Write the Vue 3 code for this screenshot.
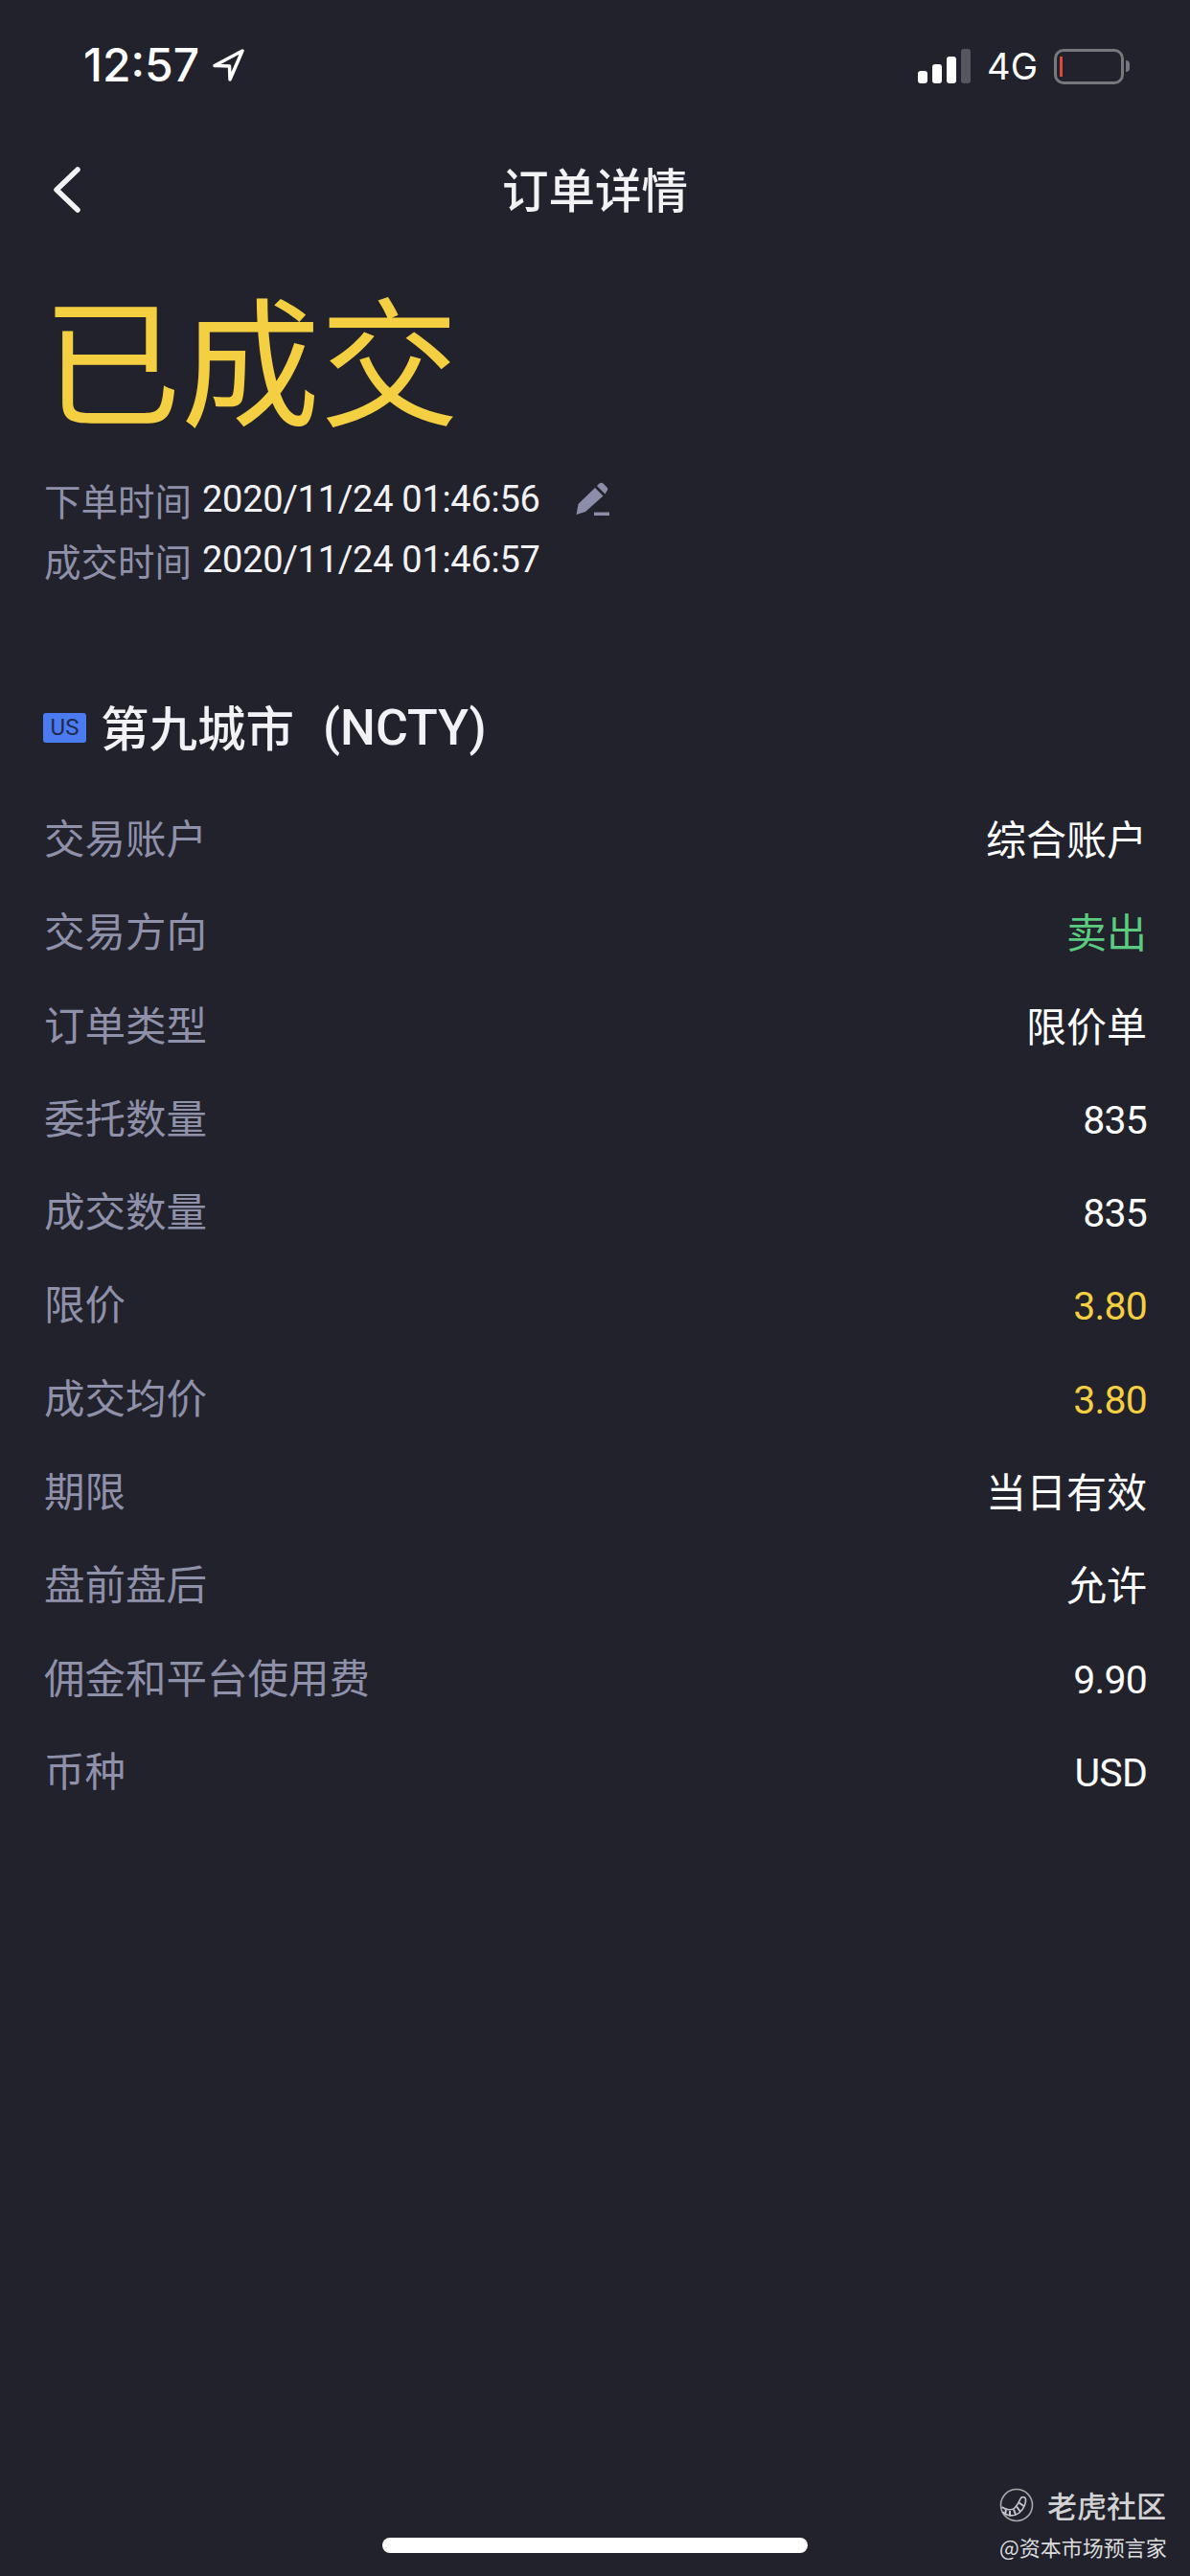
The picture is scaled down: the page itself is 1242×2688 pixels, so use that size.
<script setup>
const rows = [
  { label: '交易账户', value: '综合账户', tone: 'plain' },
  { label: '交易方向', value: '卖出', tone: 'green' },
  { label: '订单类型', value: '限价单', tone: 'plain' },
  { label: '委托数量', value: '835', tone: 'plain', num: true },
  { label: '成交数量', value: '835', tone: 'plain', num: true },
  { label: '限价', value: '3.80', tone: 'yellow', num: true },
  { label: '成交均价', value: '3.80', tone: 'yellow', num: true },
  { label: '期限', value: '当日有效', tone: 'plain' },
  { label: '盘前盘后', value: '允许', tone: 'plain' },
  { label: '佣金和平台使用费', value: '9.90', tone: 'plain', num: true },
  { label: '币种', value: 'USD', tone: 'plain', num: true },
]
</script>

<template>
  <div class="page">
    <header class="status">
      <div class="status-left">
        <span class="clock">12:57</span>
        <svg class="loc" viewBox="0 0 34 34"><path d="M31 2 2 17.500 17.500 18 18 32Z" fill="none" stroke="#fff" stroke-width="3.500" stroke-linejoin="round"/></svg>
      </div>
      <div class="status-right">
        <div class="signal"><i class="b1"></i><i class="b2"></i><i class="b3"></i><i class="b4"></i></div>
        <span class="net">4G</span>
        <div class="battery"><div class="battery-body"><i></i></div><div class="battery-cap"></div></div>
      </div>
    </header>

    <nav class="nav">
      <svg class="back" viewBox="0 0 32 48"><path d="M27 3 5 24l22 21" fill="none" stroke="#f2f2f4" stroke-width="5.500" stroke-linecap="round" stroke-linejoin="round"/></svg>
      <h1 class="title">订单详情</h1>
    </nav>

    <div class="state">已成交</div>

    <div class="times">
      <div class="time-row">
        <span class="time-label">下单时间</span>
        <span class="time-value">2020/11/24 01:46:56</span>
        <svg class="pencil" viewBox="0 0 36 36"><path d="M20 6 28.500 14.500 10 31 .5 34 2.500 23ZM22 4l2-2a3.500 3.500 0 0 1 5 0l3 3a3.500 3.500 0 0 1 0 5l-1.500 2.500Z" fill="#8c8da8"/><rect x="19" y="31.500" width="16" height="3.500" fill="#8c8da8"/></svg>
      </div>
      <div class="time-row">
        <span class="time-label">成交时间</span>
        <span class="time-value">2020/11/24 01:46:57</span>
      </div>
    </div>

    <div class="stock">
      <span class="badge">US</span>
      <span class="stock-name">第九城市</span>
      <span class="stock-code">(NCTY)</span>
    </div>

    <div class="rows">
      <div v-for="row in rows" :key="row.label" class="row">
        <span class="label">{{ row.label }}</span>
        <span class="value" :class="[row.tone, { num: row.num }]">{{ row.value }}</span>
      </div>
    </div>

    <div class="spacer"></div>
    <div class="home"></div>

    <div class="mark">
      <div class="mark-top">
        <svg class="mark-icon" viewBox="0 0 36 36">
          <circle cx="18" cy="18" r="16.500" fill="none" stroke="#a8a8ac" stroke-width="1.600"/>
          <path d="M2.500 20C7 23 13 24 16 21 19 18 21 14 22 11.500 23 9 27 9 27.500 11.500 28 15 26 22 21 26 16 30 8 30 3.500 25" fill="none" stroke="#c8c8cc" stroke-width="1.600"/>
          <path d="M7 23l-1 5M11 24v5.500M15 22.500l2 5.500M18 19.500l4 5.500M20.500 15.500l5 3.500" stroke="#c8c8cc" stroke-width="2" fill="none"/>
        </svg>
        <span class="mark-name">老虎社区</span>
      </div>
      <div class="mark-sub">@资本市场预言家</div>
    </div>
  </div>
</template>

<style>
html, body { margin: 0; background: #21222b; }
</style>

<style scoped>
.page {
  position: relative;
  width: 1242px;
  height: 2688px;
  overflow: hidden;
  background: #21222b;
  display: flex;
  flex-direction: column;
  font-family: "Noto Sans CJK SC", "Noto Sans", sans-serif;
  color: #fff;
}
.status {
  height: 136px;
  padding: 44px 63px 0 87px;
  box-sizing: border-box;
  display: flex;
  justify-content: space-between;
  align-items: flex-start;
}
.status-left { display: flex; align-items: center; gap: 14px; }
.clock { font: 500 48px/48px Inter, sans-serif; }
.loc { width: 34px; height: 34px; }
.status-right { display: flex; align-items: center; padding-top: 5px; }
.signal { display: flex; align-items: flex-end; gap: 5px; height: 36px; }
.signal i { width: 10px; border-radius: 3px; background: #fff; display: block; }
.signal .b1 { height: 13px; }
.signal .b2 { height: 20px; }
.signal .b3 { height: 28px; }
.signal .b4 { height: 36px; background: #55565e; }
.net { font: 400 38px/40px Inter, sans-serif; margin-left: 17px; }
.battery { display: flex; align-items: center; margin-left: 17px; }
.battery-body {
  width: 73px;
  height: 37px;
  box-sizing: border-box;
  border: 3px solid #77777c;
  border-radius: 10px;
  padding: 5px 3px;
}
.battery-body i { display: block; width: 3px; height: 100%; background: #e0483f; }
.battery-cap { width: 4px; height: 12px; background: #77777c; border-radius: 0 4px 4px 0; margin-left: 2px; }
.nav {
  position: relative;
  height: 124px;
  display: flex;
  align-items: center;
  justify-content: center;
}
.back { position: absolute; left: 54px; top: 38px; width: 32px; height: 48px; }
.title { margin: 0 0 5px; font-size: 48.500px; line-height: 60px; font-weight: 500; color: #f2f2f4; }
.state {
  margin: 26px 0 0 44px;
  font-size: 145px;
  line-height: 170px;
  font-weight: 400;
  color: #f4cf42;
}
.times { margin: 38px 0 0 46px; display: flex; flex-direction: column; gap: 9px; }
.time-row { display: flex; align-items: center; height: 54px; }
.time-label { font-size: 38.500px; color: #8f90aa; }
.time-value { font: 400 38px/54px Roboto, sans-serif; margin-left: 11px; color: #f2f2f6; letter-spacing: -0.300px; }
.pencil { width: 36px; height: 36px; margin-left: 37px; }
.stock { display: flex; align-items: center; margin: 118px 0 0 45px; height: 60px; }
.badge {
  width: 45px;
  height: 31px;
  border-radius: 3px;
  background: #4b7bf0;
  color: #1f2a4e;
  font: 400 24px/31px Roboto, sans-serif;
  text-align: center;
}
.stock-name { margin: 0 0 4px 15px; font-size: 50.500px; line-height: 60px; font-weight: 500; color: #f2f2f6; }
.stock-code { margin: 2px 0 0 30px; font: 500 52px/60px Roboto, sans-serif; color: #f2f2f6; }
.rows { margin-top: 56px; padding: 0 45px 0 46px; display: flex; flex-direction: column; }
.row { height: 97.300px; display: flex; justify-content: space-between; align-items: flex-start; }
.label { font-size: 42.500px; line-height: 56px; color: #8f90aa; }
.value { font-size: 42px; line-height: 58px; color: #fff; }
.value.num { font: 400 41px/64px Roboto, sans-serif; letter-spacing: -0.800px; }
.value.green { color: #5bcb80; }
.value.yellow { color: #f4cf42; }
.spacer { flex: 1; }
.home {
  align-self: center;
  width: 444px;
  height: 16px;
  border-radius: 8px;
  background: #fff;
  margin-bottom: 24px;
}
.mark { position: absolute; left: 1043px; top: 2596px; width: 180px; }
.mark-top { display: flex; align-items: center; height: 36px; }
.mark-icon { width: 36px; height: 36px; }
.mark-name { margin-left: 14px; font-size: 31px; line-height: 36px; font-weight: 500; color: #d2d2d4; white-space: nowrap; }
.mark-sub { margin-top: 11px; font-size: 22px; line-height: 28px; color: #dcdcde; white-space: nowrap; }
</style>
